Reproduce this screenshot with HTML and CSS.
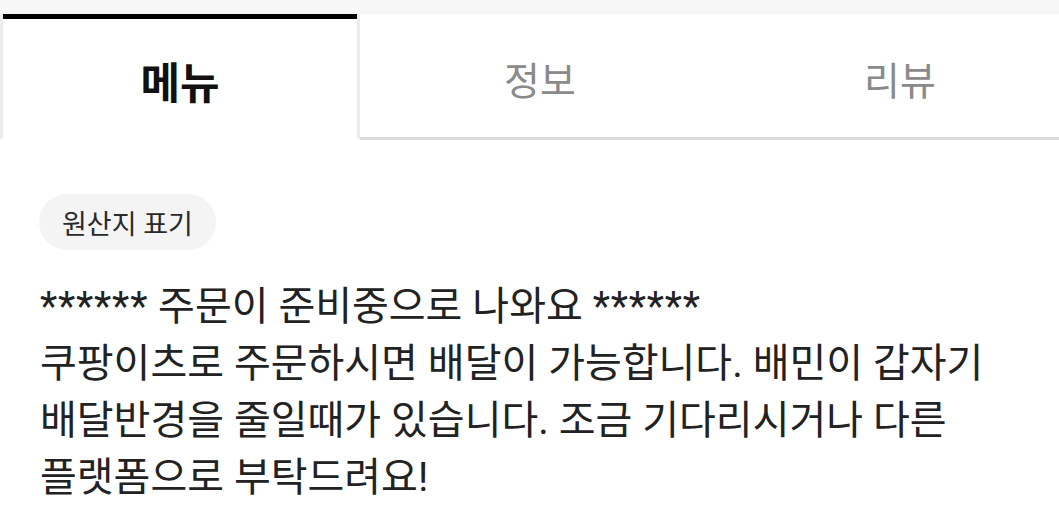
FILE: index.html
```html
<!DOCTYPE html>
<html lang="ko">
<head>
<meta charset="utf-8">
<link rel="stylesheet" href="styles.css">
</head>
<body>
<div class="topbar"></div>
<div class="tabs">
  <div class="tab active">메뉴</div>
  <div class="tab">정보</div>
  <div class="tab">리뷰</div>
</div>
<div class="content">
  <div class="chip">원산지 표기</div>
  <p class="notice"><span class="stars">******</span> 주문이 준비중으로 나와요 <span class="stars">******</span><br>쿠팡이츠로 주문하시면 배달이 가능합니다. 배민이 갑자기<br>배달반경을 줄일때가 있습니다. 조금 기다리시거나 다른<br>플랫폼으로 부탁드려요!</p>
</div>
</body>
</html>
```

FILE: styles.css
```css
html, body {
  margin: 0;
  padding: 0;
  background: #fff;
  overflow: hidden;
}
body {
  width: 1059px;
  height: 532px;
  font-family: Roboto, "Noto Sans CJK KR", sans-serif;
  color: #222;
}
.topbar {
  height: 14px;
  background: #f6f6f6;
}
.tabs {
  display: flex;
  width: 1080px;
}
.tab {
  box-sizing: border-box;
  width: 360px;
  height: 126px;
  display: flex;
  align-items: center;
  justify-content: center;
  border-bottom: 3px solid #dcdcdc;
  font-size: 39px;
  color: #8a8a8a;
  padding-top: 4px;
}
.tab.active {
  border-bottom: none;
  border-left: 3px solid #ececec;
  border-right: 3px solid #ececec;
  box-shadow: inset 0 5px 0 #000;
  height: 125px;
  color: #111;
  font-weight: bold;
  font-size: 43px;
  padding-top: 6px;
}
.content {
  padding: 54px 0 0 39px;
}
.chip {
  display: inline-flex;
  align-items: center;
  height: 56px;
  padding: 0 23px;
  border-radius: 28px;
  background: #f4f4f4;
  font-size: 27px;
  color: #2a2a2a;
}
.notice {
  margin: 28px 0 0 1px;
  font-size: 40px;
  line-height: 57px;
  color: #222;
}
.stars {
  letter-spacing: 0.8px;
}
```
